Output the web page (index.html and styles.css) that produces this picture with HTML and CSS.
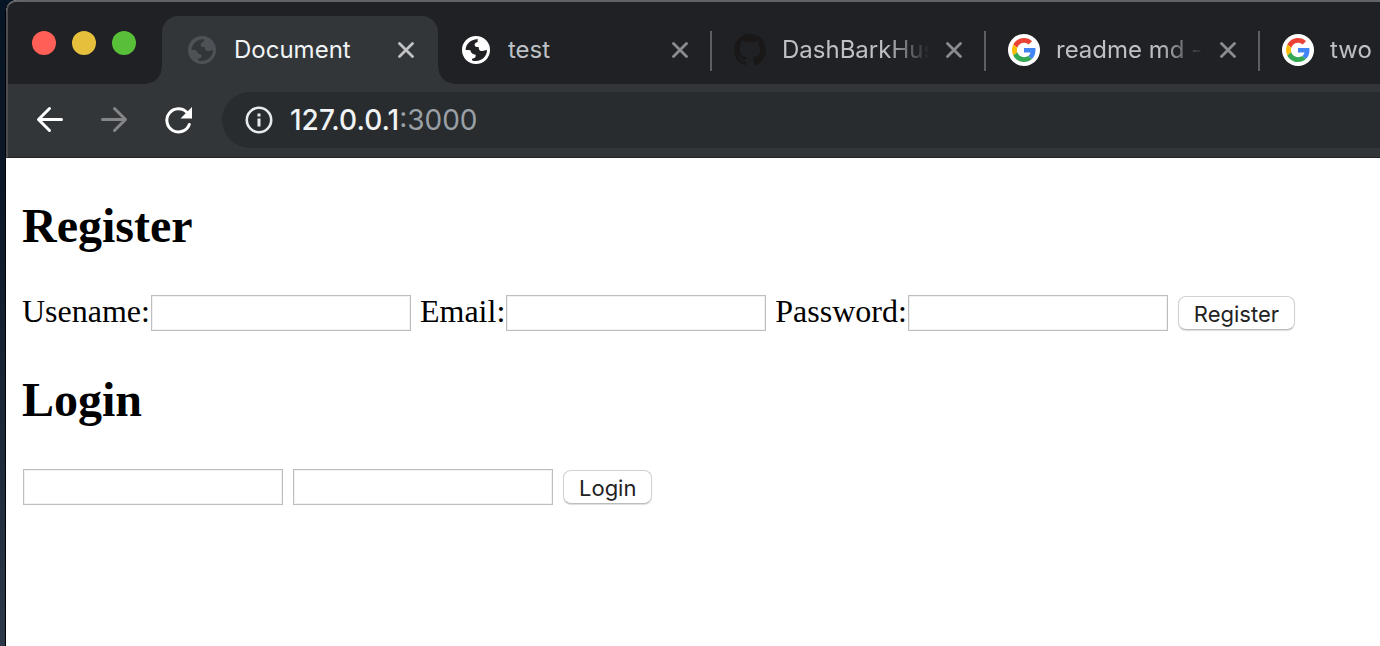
FILE: index.html
```html
<!DOCTYPE html>
<html lang="en">
<head>
<meta charset="utf-8">
<title>Document</title>
<link rel="stylesheet" href="styles.css">
</head>
<body>
<svg class="defs" aria-hidden="true">
  <symbol id="globe" viewBox="0 0 84 84"><path fill-rule="evenodd" d="M42 0a42 42 0 1 1 0 84a42 42 0 1 1 0-84zM11 42C11 26 24 11 47 9V18C40 19 37 23 38 28C39 32 43 34 50 33C50 41 53 45 58 45C64 45 70 43 75 42C75 60 60 76 40 75C31 75 29 73 30 68C38 67 42 64 41 56C33 55 27 52 25 43C20 42 16 42 11 42z" fill="currentColor"/></symbol>
  <symbol id="close" viewBox="0 0 16 16"><path d="M1.500 1.500l13 13M14.500 1.500l-13 13" fill="none" stroke="currentColor" stroke-width="2.800" stroke-linecap="round"/></symbol>
  <symbol id="google" viewBox="0 0 64 64"><circle cx="32" cy="32" r="32" fill="#fff"/><g transform="translate(8 8)"><path fill="#ea4335" d="M24 9.500c3.540 0 6.710 1.220 9.210 3.600l6.850-6.850C35.900 2.380 30.470 0 24 0 14.620 0 6.510 5.380 2.560 13.220l7.980 6.190C12.430 13.720 17.740 9.500 24 9.500z"/><path fill="#4285f4" d="M46.980 24.550c0-1.570-.15-3.090-.38-4.550H24v9.020h12.940c-.58 2.960-2.260 5.480-4.780 7.180l7.730 6c4.510-4.180 7.090-10.360 7.090-17.650z"/><path fill="#fbbc05" d="M10.530 28.590A14.500 14.500 0 0 1 9.770 24c0-1.600.27-3.140.76-4.590l-7.980-6.190A24 24 0 0 0 0 24c0 3.870.92 7.540 2.560 10.780z"/><path fill="#34a853" d="M24 48c6.480 0 11.930-2.130 15.890-5.810l-7.730-6c-2.150 1.450-4.920 2.300-8.160 2.300-6.260 0-11.570-4.220-13.470-9.910l-7.980 6.190C6.510 42.620 14.620 48 24 48z"/></g></symbol>
</svg>
<div class="window">
  <header class="tabstrip">
    <div class="lights">
      <button class="light light-red" aria-label="Close window"></button>
      <button class="light light-yellow" aria-label="Minimize window"></button>
      <button class="light light-green" aria-label="Zoom window"></button>
    </div>
    <nav class="tabs" aria-label="Tabs">
      <div class="tab tab-active">
        <svg class="favicon favicon-globe"><use href="#globe"/></svg>
        <span class="tab-title">Document</span>
        <button class="tab-close" aria-label="Close tab"><svg class="close-icon"><use href="#close"/></svg></button>
      </div>
      <div class="tab">
        <svg class="favicon favicon-globe"><use href="#globe"/></svg>
        <span class="tab-title">test</span>
        <button class="tab-close" aria-label="Close tab"><svg class="close-icon"><use href="#close"/></svg></button>
      </div>
      <div class="tab tab-divided">
        <svg class="favicon favicon-github" viewBox="0 0 16 16"><path fill="currentColor" d="M8 0C3.580 0 0 3.580 0 8c0 3.540 2.290 6.530 5.470 7.590.4.070.55-.17.55-.38 0-.19-.01-.82-.01-1.490-2.010.37-2.530-.49-2.690-.94-.09-.23-.48-.94-.82-1.130-.28-.15-.68-.52-.01-.53.63-.01 1.080.58 1.230.82.72 1.210 1.870.87 2.330.66.070-.52.28-.87.51-1.070-1.780-.2-3.640-.89-3.640-3.950 0-.87.31-1.590.82-2.150-.08-.2-.36-1.020.08-2.120 0 0 .67-.21 2.200.82.64-.18 1.320-.27 2-.27s1.360.09 2 .27c1.530-1.040 2.200-.82 2.200-.82.44 1.100.16 1.920.08 2.120.51.56.82 1.270.82 2.150 0 3.070-1.870 3.750-3.650 3.950.29.25.54.73.54 1.480 0 1.070-.01 1.930-.01 2.200 0 .21.15.46.55.38A8.010 8.010 0 0 0 16 8c0-4.420-3.580-8-8-8z"/></svg>
        <span class="tab-title tab-title-fade">DashBarkHuss</span>
        <button class="tab-close" aria-label="Close tab"><svg class="close-icon"><use href="#close"/></svg></button>
      </div>
      <div class="tab tab-divided">
        <svg class="favicon"><use href="#google"/></svg>
        <span class="tab-title tab-title-fade">readme md -</span>
        <button class="tab-close" aria-label="Close tab"><svg class="close-icon"><use href="#close"/></svg></button>
      </div>
      <div class="tab tab-divided">
        <svg class="favicon"><use href="#google"/></svg>
        <span class="tab-title tab-title-fade">two l</span>
        <button class="tab-close" aria-label="Close tab"><svg class="close-icon"><use href="#close"/></svg></button>
      </div>
    </nav>
  </header>
  <div class="toolbar">
    <button class="nav-button" aria-label="Back"><svg class="nav-icon" viewBox="0 0 32 32"><path d="M27.500 15.500H4.500M15.500 4.500L4.500 15.500l11 11" /></svg></button>
    <button class="nav-button nav-disabled" aria-label="Forward" disabled><svg class="nav-icon" viewBox="0 0 32 32"><path d="M4.500 15.500h23M16.500 4.500l11 11l-11 11"/></svg></button>
    <button class="nav-button" aria-label="Reload"><svg class="nav-icon" viewBox="0 0 32 32"><path d="M27.300 20.500A11.600 11.600 0 1 1 25 8.500"/><path class="solid" d="M30 3v11.500H18.500z"/></svg></button>
    <div class="address">
      <svg class="info-icon" viewBox="0 0 28 28"><circle cx="14" cy="14" r="12.200" fill="none" stroke="currentColor" stroke-width="2.600"/><path d="M12.500 7.500h3v3h-3zM12.500 12.500h3v8h-3z" fill="currentColor"/></svg>
      <a class="url" href="#">127.0.0.1<span class="port">:3000</span></a>
    </div>
  </div>
  <main class="page">
    <h2 class="heading">Register</h2>
    <form class="row">
      <label class="field">Usename:<input class="text-input" type="text"></label>
      <label class="field">Email:<input class="text-input" type="email"></label>
      <label class="field">Password:<input class="text-input" type="password"></label>
      <button class="submit" type="button">Register</button>
    </form>
    <h2 class="heading">Login</h2>
    <form class="row">
      <input class="text-input" type="text" aria-label="Username">
      <input class="text-input" type="password" aria-label="Password">
      <button class="submit" type="button">Login</button>
    </form>
  </main>
</div>
</body>
</html>
```
FILE: styles.css
```css
* { box-sizing: border-box; }

body {
  margin: 0;
  min-height: 100vh;
  display: flex;
  overflow: hidden;
  background: linear-gradient(#071425, #0c1828 30%, #1a2838 65%, #2b394b);
}

button {
  padding: 0;
  border: 0;
  background: none;
  color: inherit;
}

.defs { position: absolute; width: 0; height: 0; }

.window {
  flex: 1;
  min-width: 0;
  margin-left: 5px;
  display: flex;
  flex-direction: column;
  border-left: 1px solid #000;
  border-radius: 12px 0 0 0;
  overflow: hidden;
  background: #fff;
}

.tabstrip {
  display: flex;
  height: 84px;
  border-top: 2px solid #626365;
  border-left: 2px solid #4c4d50;
  border-radius: 10px 0 0 0;
  background: #202124;
  overflow: hidden;
}

.lights {
  flex: none;
  display: flex;
  gap: 16px;
  width: 154px;
  padding: 29px 0 0 24px;
}

.light { width: 24px; height: 24px; border-radius: 50%; }
.light-red { background: #ff5f57; }
.light-yellow { background: #e6c03d; }
.light-green { background: #58c038; }

.tabs { display: flex; padding-top: 14px; }

.tab {
  position: relative;
  flex: none;
  display: flex;
  align-items: center;
  gap: 16px;
  width: 274px;
  padding: 0 22px 0 24px;
  color: #bdc1c6;
  font: 24px/32px Inter, Roboto, sans-serif;
}

.tab-active {
  width: 276px;
  margin-right: -2px;
  padding-right: 24px;
  border-radius: 16px 16px 0 0;
  background: #323639;
  color: #f1f3f4;
}

.tab-active::before,
.tab-active::after {
  content: "";
  position: absolute;
  bottom: 0;
  width: 16px;
  height: 16px;
}

.tab-active::before {
  right: 100%;
  background: radial-gradient(circle at 0 0, transparent 15px, #323639 16px);
}

.tab-active::after {
  left: 100%;
  background: radial-gradient(circle at 100% 0, transparent 15px, #323639 16px);
}

.tab-divided::before {
  content: "";
  position: absolute;
  left: 0;
  top: 15px;
  width: 2px;
  height: 40px;
  background: #5c5e62;
}

.favicon { flex: none; width: 32px; height: 32px; }
.favicon-globe { padding: 2px; color: #fff; }
.tab-active .favicon-globe { color: #4d5256; }
.favicon-github { color: #191717; }

.tab-title { flex: 1; min-width: 0; overflow: hidden; white-space: nowrap; }
.tab-title-fade {
  -webkit-mask-image: linear-gradient(to right, #000 70%, transparent);
  mask-image: linear-gradient(to right, #000 70%, transparent);
}

.tab-close { flex: none; display: flex; color: #898c90; }
.tab-active .tab-close { color: #c1c3c5; }
.close-icon { width: 16px; height: 16px; }

.toolbar {
  display: flex;
  align-items: center;
  gap: 32px;
  height: 74px;
  padding: 0 0 2px 26px;
  border-left: 2px solid #4c4d50;
  border-bottom: 1px solid #222426;
  background: #323639;
  color: #fff;
}

.nav-button { flex: none; display: flex; }
.nav-disabled { color: #848688; }
.nav-icon {
  width: 32px;
  height: 32px;
  fill: none;
  stroke: currentColor;
  stroke-width: 3;
  stroke-linecap: round;
  stroke-linejoin: round;
}
.nav-icon .solid { fill: currentColor; stroke: none; }

.address {
  flex: 1;
  display: flex;
  align-items: center;
  gap: 17px;
  height: 56px;
  margin-left: -4px;
  padding-left: 23px;
  border-radius: 28px 0 0 28px;
  background: #282c2f;
  color: #e8eaed;
}

.info-icon { width: 28px; height: 28px; }

.url {
  color: #f1f3f4;
  font: 500 28px/32px Inter, Roboto, sans-serif;
  text-decoration: none;
}
.port { color: #9aa0a6; font-weight: 400; }

.page {
  padding: 0 16px;
  color: #000;
  font: 32px/38px "Liberation Serif", serif;
}

.heading { margin: 40px 0; font-size: 48px; line-height: 56px; }

.row { display: flex; align-items: center; gap: 8px; height: 38px; }
.field {
  display: flex;
  align-items: flex-start;
  line-height: 32px;
  white-space: nowrap;
}

.text-input {
  width: 260px;
  height: 36px;
  margin: 0 1px;
  padding: 2px 4px;
  border: 1px solid #bebebe;
  border-radius: 0;
  box-shadow: inset 0 0 0 1px #f1f1f1;
  background: #fff;
  font: 22px/28px Inter, sans-serif;
}

.submit {
  height: 34px;
  margin: 0 1px;
  padding: 2px 15px 0;
  border: 1px solid #d2d2d2;
  border-bottom-color: #bcbcbc;
  border-radius: 8px;
  box-shadow: 0 1px 1px #ddd;
  background: #fff;
  color: #222;
  font: 22px/30px Inter, sans-serif;
}
```
